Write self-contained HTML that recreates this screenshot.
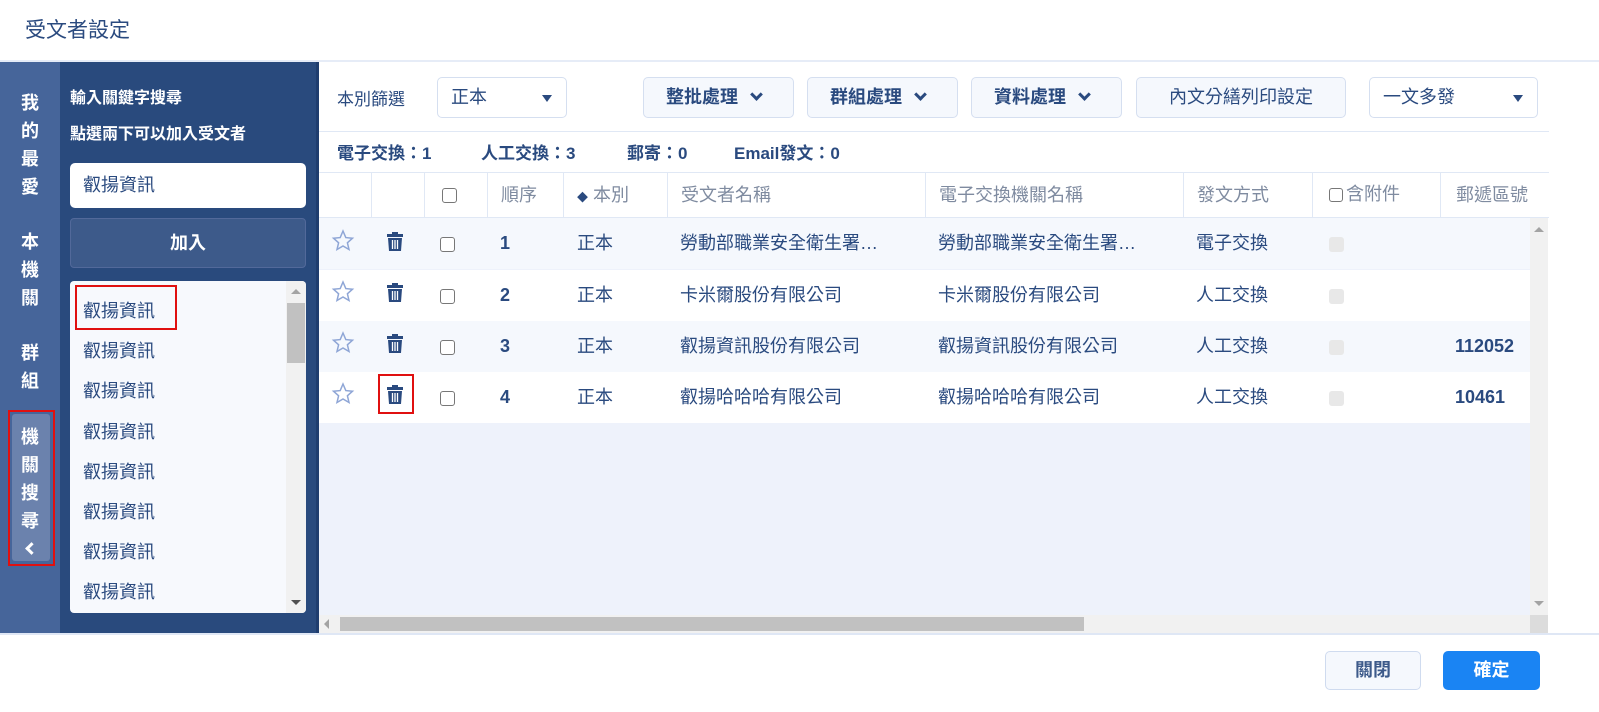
<!DOCTYPE html>
<html><head><meta charset="utf-8"><style>
*{box-sizing:border-box;margin:0;padding:0}
body{width:1599px;height:712px;position:relative;background:#fff;font-family:"Liberation Sans","Noto Sans CJK TC",sans-serif;color:#2a4a7f;overflow:hidden}
.a{position:absolute}
.rail{left:0;top:62px;width:60px;height:571px;background:#46659a}
.rc{position:absolute;left:0;width:60px;text-align:center;color:#fff;font-weight:bold;font-size:18px;line-height:28px}
.panel{left:60px;top:62px;width:256px;height:571px;background:#294a7d}
.list div{position:absolute;left:13px;font-size:18px;color:#2a4a7f}
.btn{position:absolute;top:77px;height:41px;border:1px solid #d5dff0;border-radius:5px;background:#f5f8fd;font-size:18px;font-weight:bold;color:#2a4a7f;line-height:39px}
.sel{position:absolute;top:77px;height:41px;border:1px solid #d5dff0;border-radius:5px;background:#fff;font-size:18px;color:#2a4a7f;line-height:39px;padding-left:13px}
.tri{position:absolute;right:14px;top:17px;width:0;height:0;border-left:5px solid transparent;border-right:5px solid transparent;border-top:7px solid #2a4a7f}
.chev{display:inline-block;width:9px;height:9px;border-right:3px solid #2a4a7f;border-bottom:3px solid #2a4a7f;transform:rotate(45deg);margin-left:14px;position:relative;top:-4px}
.hd{position:absolute;top:172px;height:46px;font-size:18px;color:#7f8ba0;line-height:46px;border-left:1px solid #e0e8f5}
.row{position:absolute;left:319px;width:1211px;height:51px}
.c{position:absolute;font-size:18px;line-height:51px;color:#2a4a7f;white-space:nowrap}
.cb{position:absolute;width:15px;height:15px;border:1.5px solid #777;border-radius:3px;background:#fff}
.dcb{position:absolute;width:15px;height:15px;border-radius:3px;background:#e8e8e8}
.st{position:absolute;top:139px;font-size:17px;font-weight:bold}
</style></head><body>
<div class="a" style="left:25px;top:14px;font-size:21px;color:#2a4a7f">受文者設定</div>
<div class="a" style="left:0;top:60px;width:1599px;height:2px;background:#e6ecf7"></div>

<div class="a rail"></div>
<div class="rc" style="top:89px">我<br>的<br>最<br>愛</div>
<div class="rc" style="top:228px">本<br>機<br>關</div>
<div class="rc" style="top:339px">群<br>組</div>
<div class="a" style="left:8px;top:410px;width:47px;height:156px;border:2px solid #e01010"></div>
<div class="a" style="left:12px;top:414px;width:38px;height:147px;background:#6b82ad;border-radius:3px"></div>
<div class="rc" style="top:423px">機<br>關<br>搜<br>尋</div>
<div class="a" style="left:27px;top:544px;width:9px;height:9px;border-left:3px solid #fff;border-bottom:3px solid #fff;transform:rotate(45deg)"></div>

<div class="a panel"></div>
<div class="a" style="left:70px;top:84px;color:#fff;font-weight:bold;font-size:16px">輸入關鍵字搜尋</div>
<div class="a" style="left:70px;top:120px;color:#fff;font-weight:bold;font-size:16px">點選兩下可以加入受文者</div>
<div class="a" style="left:70px;top:163px;width:236px;height:45px;background:#fff;border-radius:5px;padding-left:13px;line-height:45px;font-size:18px">叡揚資訊</div>
<div class="a" style="left:70px;top:218px;width:236px;height:50px;background:#3d5a8a;border:1px solid #52699a;border-radius:4px;color:#fff;font-weight:bold;font-size:18px;text-align:center;line-height:48px">加入</div>
<div class="a list" style="left:70px;top:281px;width:236px;height:332px;background:#f7f9fd;border-radius:4px;overflow:hidden">
<div style="top:16px">叡揚資訊</div><div style="top:56px">叡揚資訊</div><div style="top:96px">叡揚資訊</div><div style="top:137px">叡揚資訊</div><div style="top:177px">叡揚資訊</div><div style="top:217px">叡揚資訊</div><div style="top:257px">叡揚資訊</div><div style="top:297px">叡揚資訊</div>
<span class="a" style="left:216px;top:0;width:20px;height:332px;background:#f1f1f1"></span>
<span class="a" style="left:217px;top:22px;width:18px;height:60px;background:#c1c1c1"></span>
<span class="a" style="left:221px;top:8px;border-left:5px solid transparent;border-right:5px solid transparent;border-bottom:5px solid #a3a3a3"></span>
<span class="a" style="left:221px;top:319px;border-left:5px solid transparent;border-right:5px solid transparent;border-top:5px solid #505050"></span>
</div>
<div class="a" style="left:75px;top:285px;width:102px;height:45px;border:2px solid #e01010"></div>
<div class="a" style="left:316px;top:62px;width:3px;height:571px;background:#1f3d6e"></div>

<div class="a" style="left:337px;top:85px;font-size:17px">本別篩選</div>
<div class="sel" style="left:437px;width:130px">正本<span class="tri"></span></div>
<div class="btn" style="left:643px;width:151px;padding-left:22px">整批處理<span class="chev"></span></div>
<div class="btn" style="left:807px;width:151px;padding-left:22px">群組處理<span class="chev"></span></div>
<div class="btn" style="left:971px;width:151px;padding-left:22px">資料處理<span class="chev"></span></div>
<div class="btn" style="left:1136px;width:210px;text-align:center;font-weight:normal">內文分繕列印設定</div>
<div class="sel" style="left:1369px;width:169px">一文多發<span class="tri"></span></div>
<div class="a" style="left:319px;top:131px;width:1230px;height:1px;background:#e0e8f5"></div>
<div class="st" style="left:337px">電子交換：1</div>
<div class="st" style="left:481px">人工交換：3</div>
<div class="st" style="left:627px">郵寄：0</div>
<div class="st" style="left:734px">Email發文：0</div>
<div class="a" style="left:319px;top:172px;width:1230px;height:1px;background:#e0e8f5"></div>

<div class="hd" style="left:371px;width:53px"></div>
<div class="hd" style="left:424px;width:63px"><span class="cb" style="left:17px;top:16px"></span></div>
<div class="hd" style="left:487px;width:76px;padding-left:13px">順序</div>
<div class="hd" style="left:563px;width:104px;padding-left:13px;color:#7f8ba0"><span style="font-size:11px;color:#2a4a7f">◆</span> 本別</div>
<div class="hd" style="left:667px;width:258px;padding-left:13px">受文者名稱</div>
<div class="hd" style="left:925px;width:258px;padding-left:13px">電子交換機關名稱</div>
<div class="hd" style="left:1183px;width:129px;padding-left:13px">發文方式</div>
<div class="hd" style="left:1312px;width:128px;padding-left:16px;line-height:44px"><span class="cb" style="position:relative;display:inline-block;top:2px;width:14px;height:14px;margin-right:3px"></span>含附件</div>
<div class="hd" style="left:1440px;width:110px;padding-left:15px">郵遞區號</div>
<div class="a" style="left:319px;top:217px;width:1230px;height:1px;background:#e0e8f5"></div>

<div class="a" style="left:319px;top:218px;width:1211px;height:397px;background:#eef2fb"></div>
<div class="row" style="top:218px;background:#f5f8fd"></div>
<div class="row" style="top:270px;background:#fff"></div>
<div class="row" style="top:321px;background:#f5f8fd"></div>
<div class="row" style="top:372px;background:#fff"></div>

<svg class="a" style="left:331px;top:229px" width="24" height="190" viewBox="0 0 24 190">
<g fill="none" stroke="#8fa6d6" stroke-width="1.5">
<path id="s" d="M12 2 L14.8 8.6 L21.5 9.2 L16.4 13.8 L18 20.5 L12 17 L6 20.5 L7.6 13.8 L2.5 9.2 L9.2 8.6 Z"/>
<use href="#s" y="51"/><use href="#s" y="102"/><use href="#s" y="153"/>
</g></svg>
<svg class="a" style="left:386px;top:232px" width="20" height="180" viewBox="0 0 20 180">
<g fill="#2a4a7f">
<path id="t" d="M6 0h6v2h5v3H1V2h5z M2 6h14l-1 13H3z"/>
<use href="#t" y="51"/><use href="#t" y="102"/><use href="#t" y="153"/>
</g>
<g stroke="#fff" stroke-width="1.3"><path d="M6.5 8v9M9 8v9M11.5 8v9M6.5 59v9M9 59v9M11.5 59v9M6.5 110v9M9 110v9M11.5 110v9M6.5 161v9M9 161v9M11.5 161v9"/></g>
</svg>
<div class="a" style="left:378px;top:374px;width:36px;height:40px;border:2px solid #e01010"></div>
<span class="cb" style="left:440px;top:237px"></span><span class="cb" style="left:440px;top:289px"></span><span class="cb" style="left:440px;top:340px"></span><span class="cb" style="left:440px;top:391px"></span>
<span class="dcb" style="left:1329px;top:237px"></span><span class="dcb" style="left:1329px;top:289px"></span><span class="dcb" style="left:1329px;top:340px"></span><span class="dcb" style="left:1329px;top:391px"></span>

<div class="c" style="left:500px;top:218px;font-weight:bold">1</div>
<div class="c" style="left:577px;top:218px">正本</div>
<div class="c" style="left:680px;top:218px">勞動部職業安全衛生署…</div>
<div class="c" style="left:938px;top:218px">勞動部職業安全衛生署…</div>
<div class="c" style="left:1196px;top:218px">電子交換</div>

<div class="c" style="left:500px;top:270px;font-weight:bold">2</div>
<div class="c" style="left:577px;top:270px">正本</div>
<div class="c" style="left:680px;top:270px">卡米爾股份有限公司</div>
<div class="c" style="left:938px;top:270px">卡米爾股份有限公司</div>
<div class="c" style="left:1196px;top:270px">人工交換</div>

<div class="c" style="left:500px;top:321px;font-weight:bold">3</div>
<div class="c" style="left:577px;top:321px">正本</div>
<div class="c" style="left:680px;top:321px">叡揚資訊股份有限公司</div>
<div class="c" style="left:938px;top:321px">叡揚資訊股份有限公司</div>
<div class="c" style="left:1196px;top:321px">人工交換</div>
<div class="c" style="left:1455px;top:321px;font-weight:bold">112052</div>

<div class="c" style="left:500px;top:372px;font-weight:bold">4</div>
<div class="c" style="left:577px;top:372px">正本</div>
<div class="c" style="left:680px;top:372px">叡揚哈哈哈有限公司</div>
<div class="c" style="left:938px;top:372px">叡揚哈哈哈有限公司</div>
<div class="c" style="left:1196px;top:372px">人工交換</div>
<div class="c" style="left:1455px;top:372px;font-weight:bold">10461</div>

<div class="a" style="left:1530px;top:218px;width:18px;height:397px;background:#f1f1f1"></div>
<div class="a" style="left:1534px;top:227px;border-left:5px solid transparent;border-right:5px solid transparent;border-bottom:5px solid #a3a3a3"></div>
<div class="a" style="left:1534px;top:601px;border-left:5px solid transparent;border-right:5px solid transparent;border-top:5px solid #a3a3a3"></div>
<div class="a" style="left:319px;top:615px;width:1229px;height:18px;background:#f1f1f1"></div>
<div class="a" style="left:340px;top:617px;width:744px;height:14px;background:#c1c1c1"></div>
<div class="a" style="left:324px;top:619px;border-top:5px solid transparent;border-bottom:5px solid transparent;border-right:5px solid #a3a3a3"></div>
<div class="a" style="left:1532px;top:619px;border-top:5px solid transparent;border-bottom:5px solid transparent;border-left:5px solid #333"></div>
<div class="a" style="left:1530px;top:615px;width:18px;height:18px;background:#dcdcdc"></div>
<div class="a" style="left:0;top:633px;width:1599px;height:2px;background:#dfe7f5"></div>

<div class="a" style="left:1325px;top:651px;width:96px;height:39px;border:1px solid #cfdbef;border-radius:5px;background:#f5f8fd;text-align:center;line-height:37px;font-size:18px;font-weight:bold;color:#3d5a8a">關閉</div>
<div class="a" style="left:1443px;top:651px;width:97px;height:39px;border-radius:5px;background:#1a84f3;text-align:center;line-height:39px;font-size:18px;font-weight:bold;color:#fff">確定</div>
</body></html>
